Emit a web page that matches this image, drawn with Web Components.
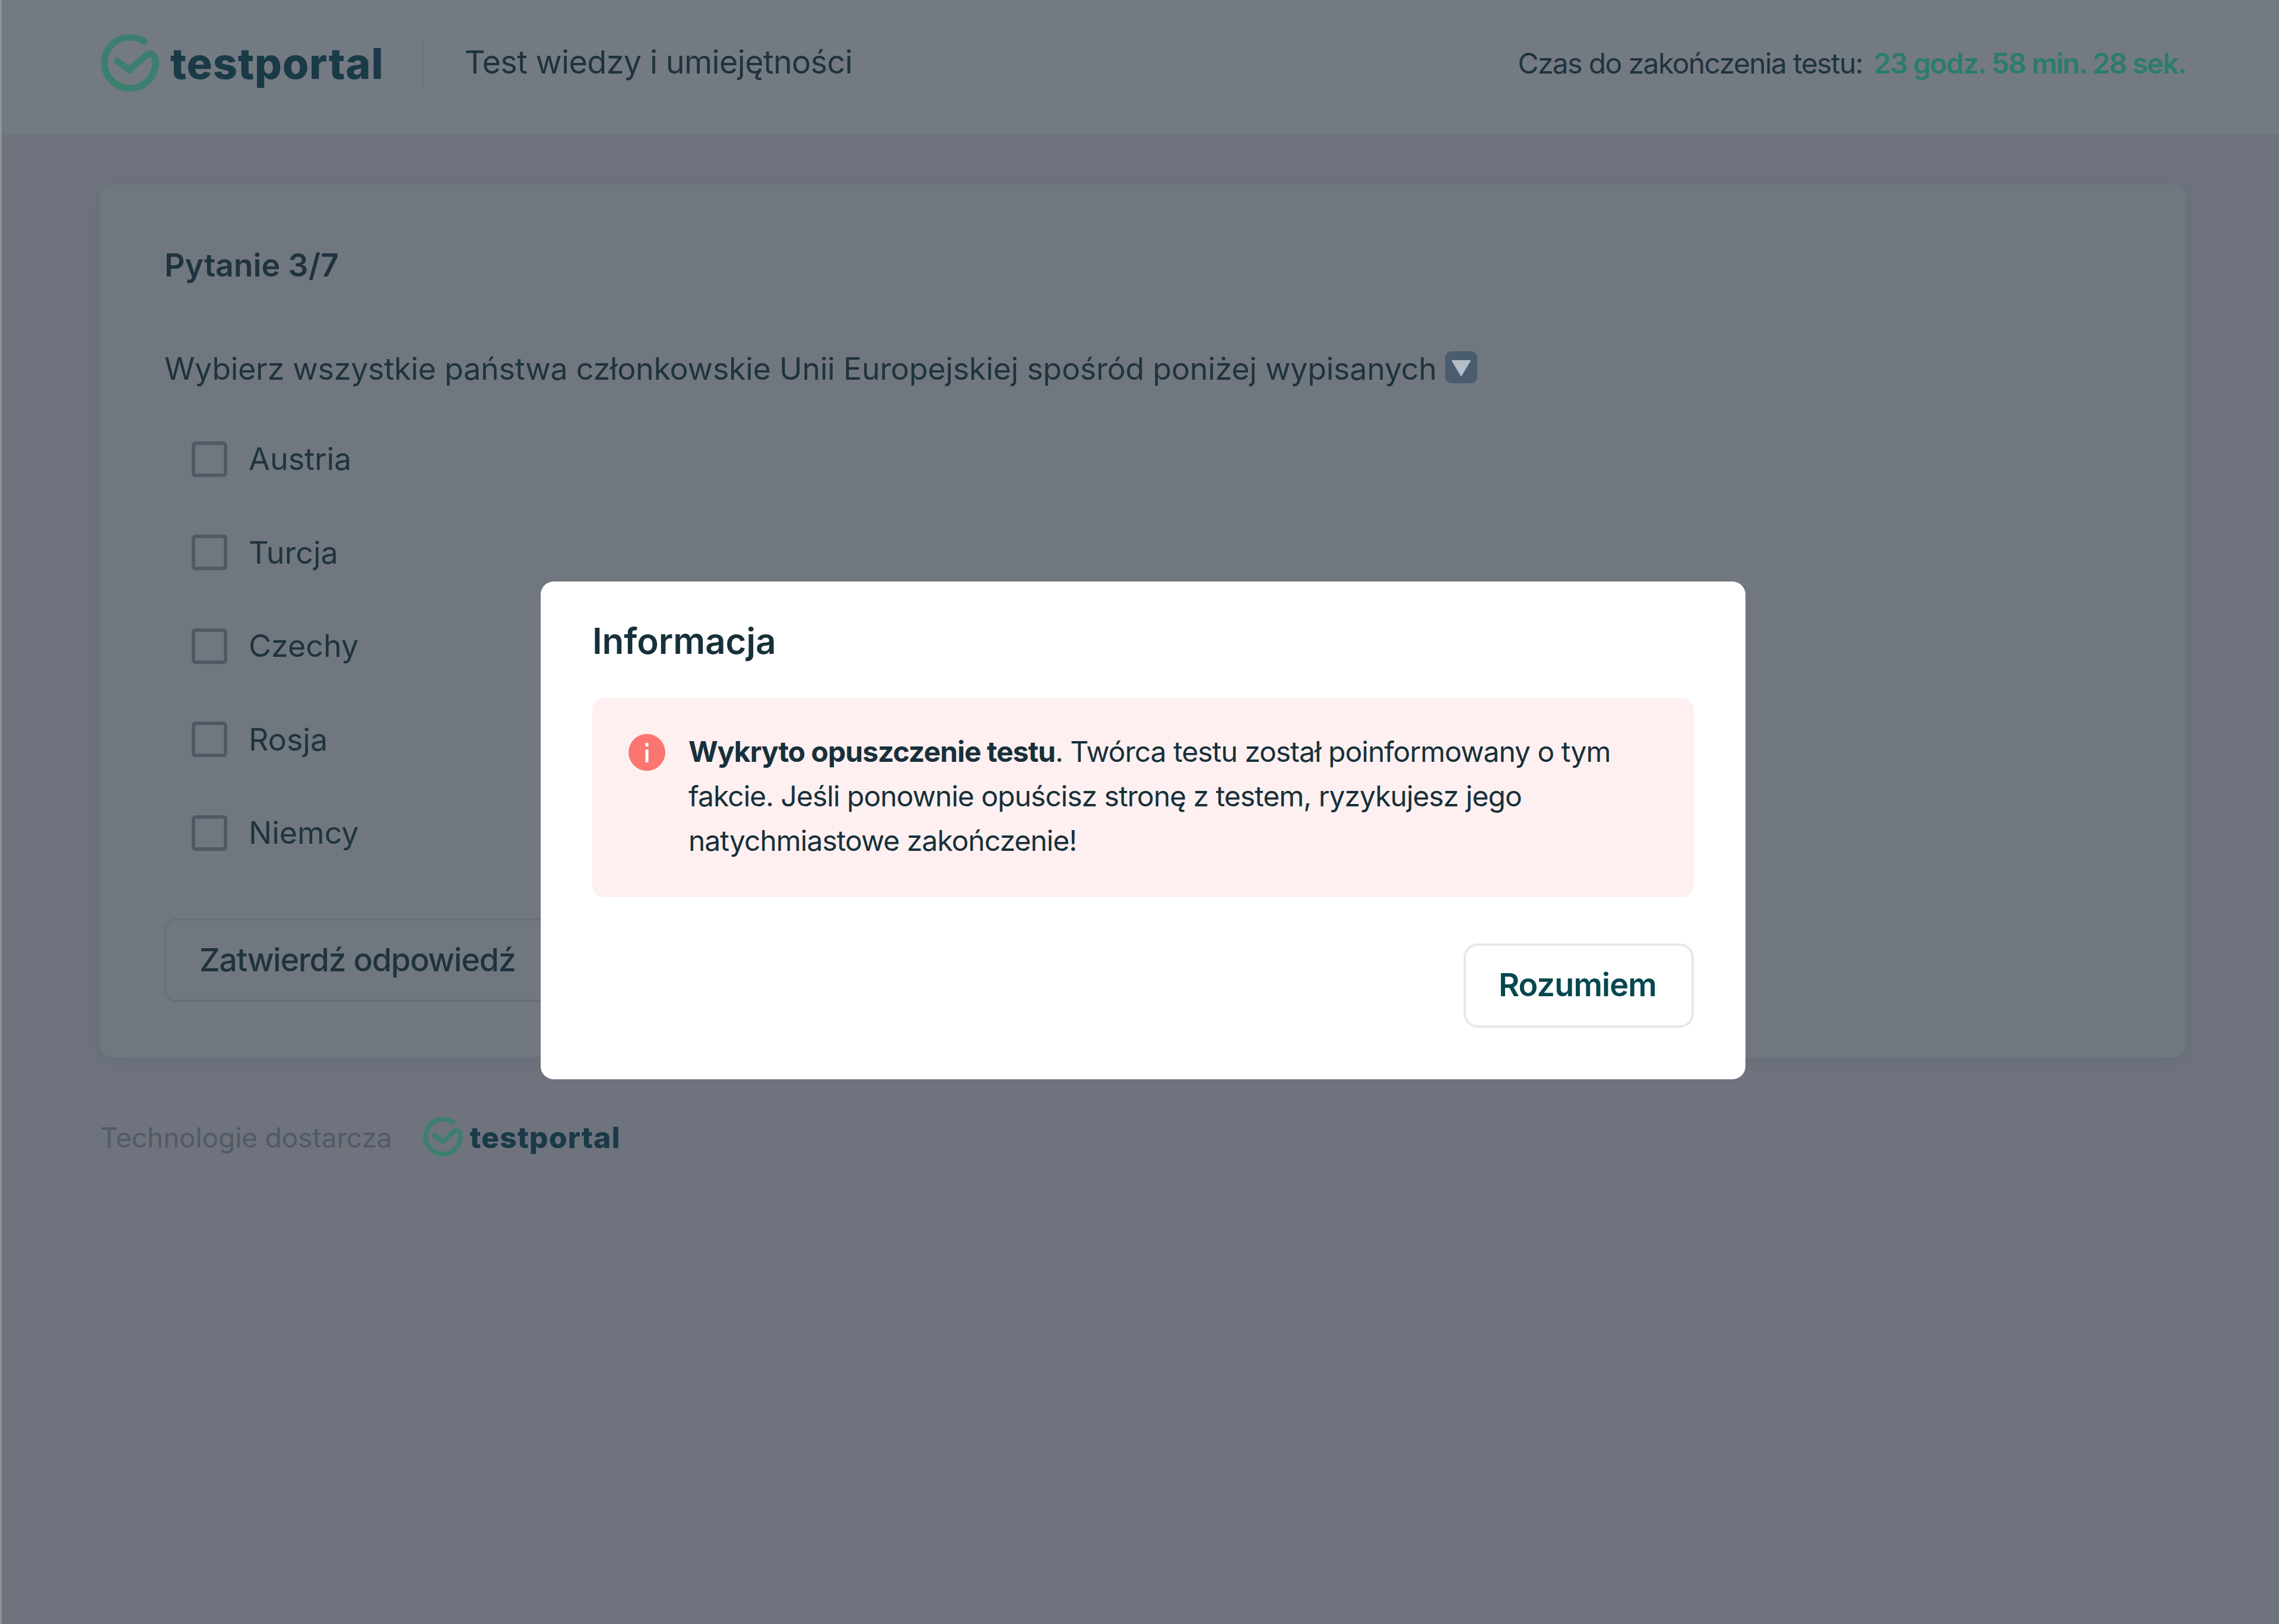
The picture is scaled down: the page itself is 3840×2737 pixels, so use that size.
<!DOCTYPE html>
<html lang="pl">
<head>
<meta charset="utf-8">
<title>Test wiedzy i umiejętności</title>
<style>
    html, body { margin: 0; padding: 0; }
    body {
        width: 3840px;
        height: 2737px;
        background: #6e737e;
        font-family: Inter, "Noto Sans", sans-serif;
        color: #1f333e;
        overflow: hidden;
    }
</style>
</head>
<body>
<test-page>
    <test-header slot="header" title-text="Test wiedzy i umiejętności" time-label="Czas do zakończenia testu:" time-value="23 godz. 58 min. 28 sek."></test-header>
    <question-card heading="Pytanie 3/7" button-label="Zatwierdź odpowiedź">
        <span slot="question">Wybierz wszystkie państwa członkowskie Unii Europejskiej spośród poniżej wypisanych</span>
        <check-option>Austria</check-option>
        <check-option>Turcja</check-option>
        <check-option>Czechy</check-option>
        <check-option>Rosja</check-option>
        <check-option>Niemcy</check-option>
    </question-card>
    <test-footer></test-footer>
</test-page>
<info-modal heading="Informacja" button-label="Rozumiem">
    <b>Wykryto opuszczenie testu</b>. Twórca testu został poinformowany o tym<br>fakcie. Jeśli ponownie opuścisz stronę z testem, ryzykujesz jego<br>natychmiastowe zakończenie!
</info-modal>

<script>
class TestPage extends HTMLElement {
    constructor() {
        super();
        this.attachShadow({ mode: 'open' });
        this.shadowRoot.innerHTML = `
            <style>
                :host { display: block; width: 3840px; height: 2737px; box-sizing: border-box; border-left: 3px solid #8f949b; }
                .content { padding: 86px 157px 0 166px; }
            </style>
            <slot name="header"></slot>
            <div class="content"><slot></slot></div>
        `;
    }
}

class TpLogo extends HTMLElement {
    constructor() {
        super();
        this.attachShadow({ mode: 'open' });
        this.shadowRoot.innerHTML = `
            <style>
                :host { display: inline-flex; align-items: center; gap: var(--logo-gap, 19px); }
                svg { width: var(--logo-icon, 98px); height: var(--logo-icon, 98px); display: block; }
                span {
                    font-size: var(--logo-font, 72px);
                    font-weight: 800;
                    letter-spacing: var(--logo-spacing, 0.8px);
                    line-height: 1;
                    color: #1a3a47;
                }
            </style>
            <svg viewBox="0 0 98 98" fill="none" stroke="#3d7f6e" stroke-width="11.5" stroke-linecap="round" stroke-linejoin="round">
                <path d="M73 12A43 43 0 1 0 92 46C92 33 82 29 75 36L48 60L28 45"/>
            </svg>
            <span>testportal</span>
        `;
    }
}

class TestHeader extends HTMLElement {
    constructor() {
        super();
        this.attachShadow({ mode: 'open' });
        this.shadowRoot.innerHTML = `
            <style>
                :host { display: flex; align-items: center; height: 225px; box-sizing: border-box; padding: 0 157px 12px 167px; background: #747a82; }
                .divider { width: 2px; height: 85px; background: #6d737a; margin: 0 69px 0 65px; }
                .title { font-size: 54px; line-height: 70px; color: #1f333e; letter-spacing: -0.7px; margin-top: -3px; }
                .timer { margin-left: auto; font-size: 48px; line-height: 60px; display: flex; gap: 18px; color: #1f333e; letter-spacing: -1.6px; }
                .time { color: #2b7d68; font-weight: 600; letter-spacing: -1.8px; }
            </style>
            <tp-logo></tp-logo>
            <div class="divider"></div>
            <div class="title"></div>
            <div class="timer"><span class="label"></span><span class="time"></span></div>
        `;
    }

    connectedCallback() {
        this.shadowRoot.querySelector('.title').textContent = this.getAttribute('title-text');
        this.shadowRoot.querySelector('.label').textContent = this.getAttribute('time-label');
        this.shadowRoot.querySelector('.time').textContent = this.getAttribute('time-value');
    }
}

class CheckOption extends HTMLElement {
    constructor() {
        super();
        this.attachShadow({ mode: 'open' });
        this.shadowRoot.innerHTML = `
            <style>
                :host { display: flex; align-items: center; gap: 36px; height: 157.5px; padding-left: 46px; font-size: 52px; color: #1f333e; }
                .box { width: 60px; height: 60px; box-sizing: border-box; border: 6px solid #4f5a64; border-radius: 6px; }
            </style>
            <div class="box"></div>
            <slot></slot>
        `;
    }
}

class QuestionCard extends HTMLElement {
    constructor() {
        super();
        this.attachShadow({ mode: 'open' });
        this.shadowRoot.innerHTML = `
            <style>
                :host { display: block; box-sizing: border-box; height: 1471px; padding: 106px 108px 97px; background: #71777f; border-radius: 20px; box-shadow: 0 6px 24px rgba(60, 70, 80, .12); }
                .heading { font-size: 53.5px; line-height: 60px; font-weight: 600; color: #1f333e; }
                .question { display: flex; align-items: center; gap: 14px; margin-top: 109px; font-size: 52px; line-height: 72px; color: #1f333e; letter-spacing: -0.27px; }
                .options { margin-top: 37px; }
                .submit { display: inline-flex; align-items: center; box-sizing: border-box; height: 140px; margin-top: 65px; padding: 0 56px; border: 3px solid #686e76; border-radius: 20px; font-size: 54px; font-weight: 500; color: #1f333e; letter-spacing: -1.3px; }
                svg { width: 54px; height: 54px; display: block; margin-top: -6px; }
            </style>
            <div class="heading"></div>
            <div class="question">
                <slot name="question"></slot>
                <svg viewBox="0 0 54 54">
                    <rect width="54" height="54" rx="11" fill="#4a5c6f"/>
                    <path d="M12 16H42L27 41Z" fill="#b4bdc8" stroke="#b4bdc8" stroke-width="2" stroke-linejoin="round"/>
                </svg>
            </div>
            <div class="options"><slot></slot></div>
            <div class="submit"></div>
        `;
    }

    connectedCallback() {
        this.shadowRoot.querySelector('.heading').textContent = this.getAttribute('heading');
        this.shadowRoot.querySelector('.submit').textContent = this.getAttribute('button-label');
    }
}

class TestFooter extends HTMLElement {
    constructor() {
        super();
        this.attachShadow({ mode: 'open' });
        this.shadowRoot.innerHTML = `
            <style>
                :host { display: flex; align-items: center; gap: 53px; margin-top: 101px; font-size: 46px; color: #525a64; letter-spacing: -0.1px; --logo-icon: 67px; --logo-font: 50px; --logo-gap: 11px; --logo-spacing: 1px; }
            </style>
            <span>Technologie dostarcza</span>
            <tp-logo></tp-logo>
        `;
    }
}

class InfoModal extends HTMLElement {
    constructor() {
        super();
        this.attachShadow({ mode: 'open' });
        this.shadowRoot.innerHTML = `
            <style>
                :host { position: absolute; left: 911px; top: 980px; width: 2030px; height: 839px; box-sizing: border-box; padding: 62px 87px 0 87px; background: #fff; border-radius: 22px; font-family: Inter, "Noto Sans", sans-serif; }
                h2 { margin: 0; font-size: 60px; line-height: 76px; font-weight: 600; color: #17303a; }
                .alert { display: flex; gap: 39px; box-sizing: border-box; height: 336px; margin-top: 58px; padding: 53px 61px; background: #fef0f0; border-radius: 20px; font-size: 48px; line-height: 75px; color: #17303a; letter-spacing: -1px; }
                svg { width: 62px; height: 62px; flex: none; margin-top: 8px; display: block; }
                .actions { display: flex; justify-content: flex-end; margin-top: 78px; }
                .btn { display: flex; align-items: center; box-sizing: border-box; width: 388px; height: 142px; padding: 0 4px 4px 0; justify-content: center; border: 4px solid #e6e8ee; border-radius: 24px; font-size: 54px; font-weight: 600; color: #07474f; letter-spacing: -0.9px; }
            </style>
            <h2></h2>
            <div class="alert">
                <svg viewBox="0 0 62 62">
                    <circle cx="31" cy="31" r="31" fill="#fb7670"/>
                    <rect x="28.5" y="26" width="5" height="22" fill="#fff"/>
                    <rect x="28.5" y="15" width="5" height="6" fill="#fff"/>
                </svg>
                <div><slot></slot></div>
            </div>
            <div class="actions"><div class="btn"></div></div>
        `;
    }

    connectedCallback() {
        this.shadowRoot.querySelector('h2').textContent = this.getAttribute('heading');
        this.shadowRoot.querySelector('.btn').textContent = this.getAttribute('button-label');
    }
}

customElements.define('tp-logo', TpLogo);
customElements.define('check-option', CheckOption);
customElements.define('test-header', TestHeader);
customElements.define('question-card', QuestionCard);
customElements.define('test-footer', TestFooter);
customElements.define('info-modal', InfoModal);
customElements.define('test-page', TestPage);
</script>
</body>
</html>
